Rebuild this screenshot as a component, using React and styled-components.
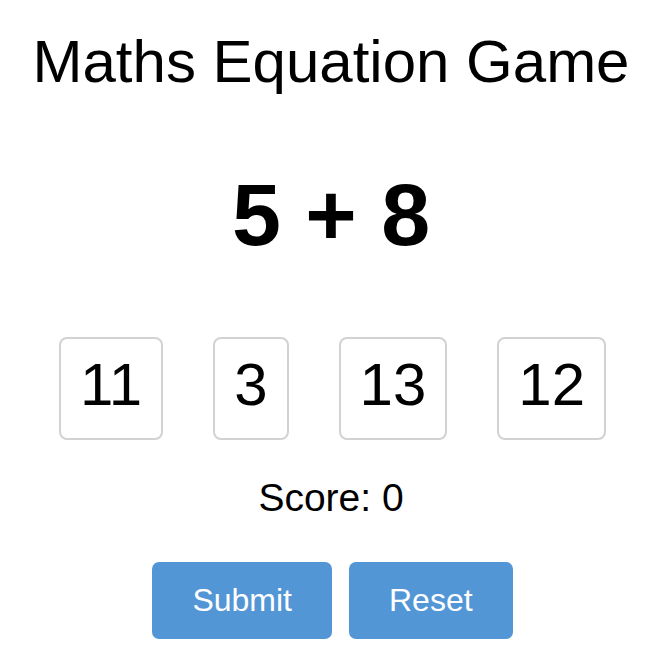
import React, { useState } from 'react'
import styled, { createGlobalStyle } from 'styled-components'

const GlobalStyle = createGlobalStyle`
  body {
    margin: 0;
    background: #ffffff;
    font-family: 'Liberation Sans', Arial, Helvetica, sans-serif;
    color: #000000;
  }
`

const Wrapper = styled.main`
  display: flex;
  flex-direction: column;
  align-items: center;
  width: 662px;
  padding-top: 27px;
`

const Title = styled.h1`
  margin: 0;
  font-size: 60px;
  font-weight: 400;
  line-height: 69px;
`

const Equation = styled.h2`
  margin: 68px 0 0;
  font-size: 88px;
  font-weight: 700;
  line-height: 101px;
`

const Options = styled.div`
  display: flex;
  gap: 50px;
  margin-top: 72px;
  margin-left: 3px;
`

const Option = styled.button`
  font-family: inherit;
  font-size: 60px;
  line-height: 69px;
  color: #000;
  background: ${(p) => (p.$active ? '#eaf3fb' : '#ffffff')};
  border: 2px solid #d2d2d2;
  border-radius: 8px;
  padding: 11px 19px 19px;
  cursor: pointer;
`

const Score = styled.p`
  margin: 35px 0 0;
  font-size: 39px;
  line-height: 45px;
`

const Actions = styled.div`
  display: flex;
  gap: 17px;
  margin-top: 42px;
  margin-left: 3px;
`

const ActionButton = styled.button`
  font-family: inherit;
  font-size: 32px;
  line-height: 37px;
  color: #ffffff;
  background: #5396d6;
  border: none;
  border-radius: 7px;
  padding: 20px 40px;
  cursor: pointer;
`

const App = () => {
  const [picked, setPicked] = useState(null)
  const options = [11, 3, 13, 12]

  return (
    <>
      <GlobalStyle />
      <Wrapper>
        <Title>Maths Equation Game</Title>
        <Equation>5 + 8</Equation>
        <Options>
          {options.map((n) => (
            <Option key={n} $active={picked === n} onClick={() => setPicked(n)}>
              {n}
            </Option>
          ))}
        </Options>
        <Score>Score: 0</Score>
        <Actions>
          <ActionButton>Submit</ActionButton>
          <ActionButton onClick={() => setPicked(null)}>Reset</ActionButton>
        </Actions>
      </Wrapper>
    </>
  )
}

export default App
